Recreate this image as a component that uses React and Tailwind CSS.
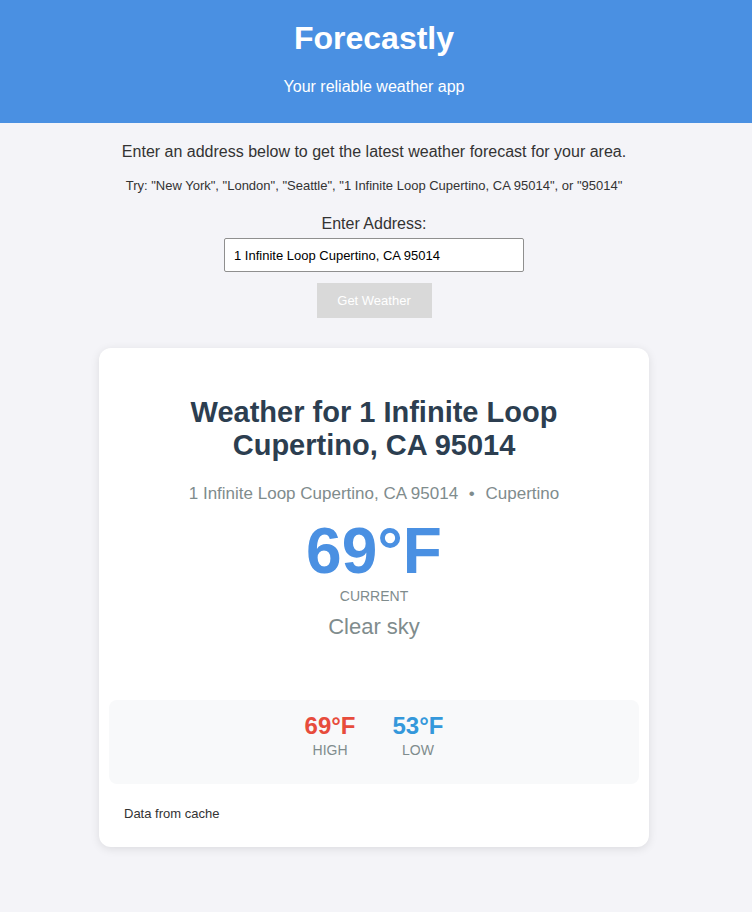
export default function App() {
  return (
    <div className="min-h-[912px] bg-[#f4f4f8] pr-[4px] font-['Liberation_Sans',Arial,sans-serif] text-[#333]">
      <header className="-mr-[4px] bg-[#4a90e2] pt-[20px] pr-[4px] pb-[27px] text-center text-white">
        <h1 className="text-[32px] font-bold leading-[37px]">Forecastly</h1>
        <p className="mt-[21px] text-[16px] leading-[18px]">Your reliable weather app</p>
      </header>

      <main className="flex flex-col items-center pt-[20px]">
        <p className="text-[16px] leading-[18px]">
          Enter an address below to get the latest weather forecast for your area.
        </p>
        <p className="mt-[17px] text-[13px] leading-[15px]">
          Try: "New York", "London", "Seattle", "1 Infinite Loop Cupertino, CA 95014", or "95014"
        </p>

        <label className="mt-[22px] text-[16px] leading-[18px]" htmlFor="address">
          Enter Address:
        </label>
        <input
          id="address"
          readOnly
          value="1 Infinite Loop Cupertino, CA 95014"
          className="mt-[5px] h-[34px] w-[300px] rounded-[2px] border border-[#8f8f8f] bg-white px-[9px] text-[13px] text-black outline-none"
        />
        <button
          disabled
          className="mt-[11px] h-[35px] w-[115px] bg-[#d9d9d9] text-[13px] text-white"
        >
          Get Weather
        </button>

        <section className="mt-[30px] mb-[65px] w-[550px] rounded-[12px] bg-white px-[10px] pt-[48px] pb-[26px] shadow-[0_2px_10px_rgba(0,0,0,0.1)]">
          <div className="flex flex-col items-center text-center">
            <h2 className="w-[400px] text-[29px] font-bold leading-[33px] text-[#2c3e50]">
              Weather for 1 Infinite Loop Cupertino, CA 95014
            </h2>
            <p className="mt-[22px] text-[17px] leading-[20px] text-[#7f8c8d]">
              1 Infinite Loop Cupertino, CA 95014 <span className="mx-[6px]">•</span> Cupertino
            </p>
            <div className="mt-[10px] text-[64px] font-bold leading-[74px] text-[#4a90e2]">69°F</div>
            <div className="mt-[0px] text-[14px] leading-[16px] text-[#7f8c8d]">CURRENT</div>
            <div className="mt-[10px] text-[22px] leading-[25px] text-[#7f8c8d]">Clear sky</div>
          </div>

          <div className="mt-[61px] flex h-[84px] items-start justify-center gap-[37px] rounded-[8px] bg-[#f8f9fa] pt-[12px]">
            <div className="flex flex-col items-center">
              <span className="text-[24px] font-bold leading-[28px] text-[#e74c3c]">69°F</span>
              <span className="mt-[2px] text-[14px] leading-[16px] text-[#7f8c8d]">HIGH</span>
            </div>
            <div className="flex flex-col items-center">
              <span className="text-[24px] font-bold leading-[28px] text-[#3498db]">53°F</span>
              <span className="mt-[2px] text-[14px] leading-[16px] text-[#7f8c8d]">LOW</span>
            </div>
          </div>

          <p className="mt-[22px] px-[15px] text-[13px] leading-[15px] text-[#333]">Data from cache</p>
        </section>
      </main>
    </div>
  );
}
